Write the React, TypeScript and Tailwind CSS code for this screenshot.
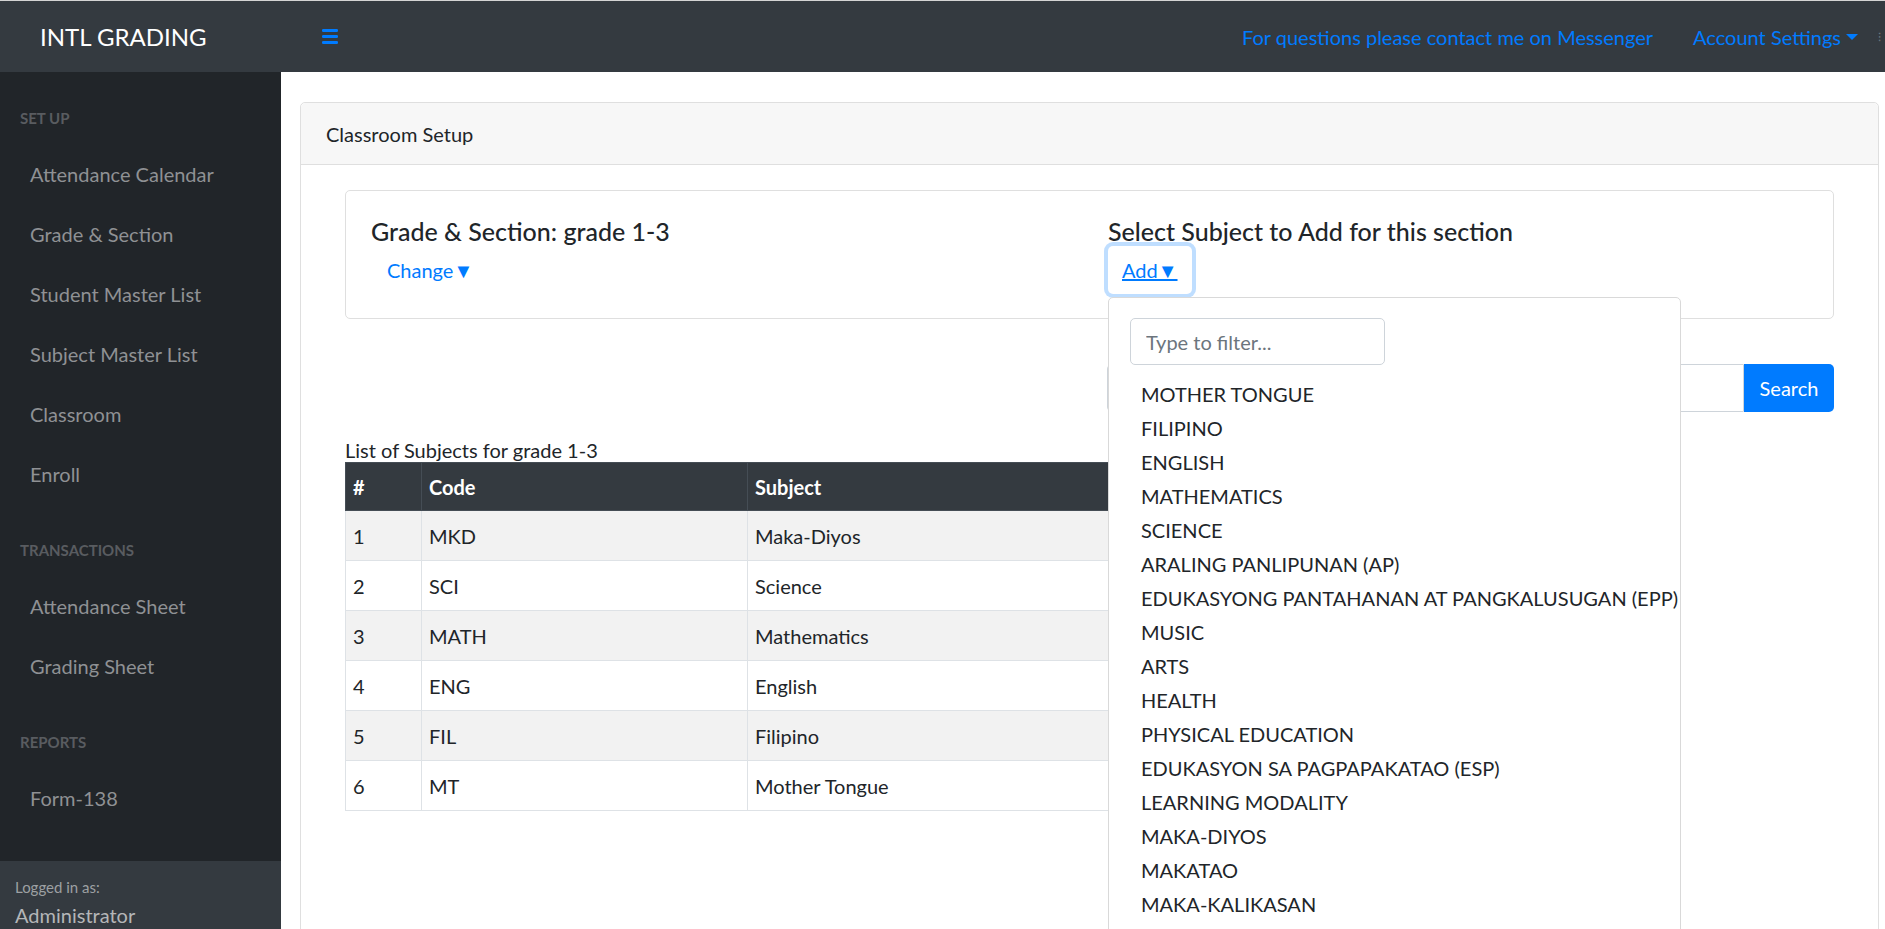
const menu = [
  {
    title: 'SET UP',
    items: ['Attendance Calendar', 'Grade & Section', 'Student Master List', 'Subject Master List', 'Classroom', 'Enroll'],
  },
  { title: 'TRANSACTIONS', items: ['Attendance Sheet', 'Grading Sheet'] },
  { title: 'REPORTS', items: ['Form-138'] },
];

const subjects = [
  { no: 1, code: 'MKD', name: 'Maka-Diyos' },
  { no: 2, code: 'SCI', name: 'Science' },
  { no: 3, code: 'MATH', name: 'Mathematics' },
  { no: 4, code: 'ENG', name: 'English' },
  { no: 5, code: 'FIL', name: 'Filipino' },
  { no: 6, code: 'MT', name: 'Mother Tongue' },
];

const options = [
  'MOTHER TONGUE',
  'FILIPINO',
  'ENGLISH',
  'MATHEMATICS',
  'SCIENCE',
  'ARALING PANLIPUNAN (AP)',
  'EDUKASYONG PANTAHANAN AT PANGKALUSUGAN (EPP)',
  'MUSIC',
  'ARTS',
  'HEALTH',
  'PHYSICAL EDUCATION',
  'EDUKASYON SA PAGPAPAKATAO (ESP)',
  'LEARNING MODALITY',
  'MAKA-DIYOS',
  'MAKATAO',
  'MAKA-KALIKASAN',
];

function Navbar() {
  return (
    <nav className="h-[72px] shrink-0 bg-[#343a40] border-t border-[#d4d4d4] flex items-center">
      <div className="w-[281px] pl-[40px] text-[24px] text-white leading-none">INTL GRADING</div>
      <button className="ml-[41px] text-[#007bff]">
        <svg width="16" height="15" viewBox="0 0 16 15" fill="currentColor">
          <rect x="0" y="0" width="16" height="3" rx="1.2" />
          <rect x="0" y="6" width="16" height="3" rx="1.2" />
          <rect x="0" y="12" width="16" height="3" rx="1.2" />
        </svg>
      </button>
      <div className="ml-auto flex items-center text-[20px] text-[#007bff]">
        <a className="mr-[40px]">For questions please contact me on Messenger</a>
        <a className="flex items-center">
          Account Settings
          <span className="ml-[5px] inline-block w-0 h-0 border-x-[6px] border-x-transparent border-t-[6px] border-t-[#007bff]" />
        </a>
        <span className="ml-[20px] mr-[4px] text-[12px] text-[#6c757d]">⁝</span>
      </div>
    </nav>
  );
}

function Sidebar() {
  return (
    <aside className="w-[281px] shrink-0 bg-[#212529] flex flex-col justify-between">
      <div>
        {menu.map((section) => (
          <div key={section.title}>
            <div className="pt-[35px] pb-[15px] px-[20px] text-[15px] leading-[22px] font-bold text-[#595c60]">
              {section.title}
            </div>
            {section.items.map((item) => (
              <a key={item} className="block py-[15px] px-[30px] text-[20px] leading-[30px] text-[#8f9194]">
                {item}
              </a>
            ))}
          </div>
        ))}
      </div>
      <div className="bg-[#343a40] h-[68px] px-[15px] pt-[15px]">
        <div className="text-[15px] leading-[22px] text-[#9da0a3]">Logged in as:</div>
        <div className="pt-[2px] text-[20px] leading-[30px] text-[#b4b6b8]">Administrator</div>
      </div>
    </aside>
  );
}

export default function App() {
  return (
    <div className="h-[929px] overflow-hidden bg-white flex flex-col font-[Lato,'Open_Sans',sans-serif] text-[#212529]">
      <Navbar />
      <div className="flex flex-1 min-h-0">
        <Sidebar />
        <main className="flex-1 pl-[19px] pr-[6px] pt-[30px]">
          <div className="border border-[#dfdfdf] rounded-[5px] h-[900px]">
            <div className="h-[62px] bg-[#f7f7f7] border-b border-[#dfdfdf] rounded-t-[5px] px-[25px] flex items-center text-[20px]">
              Classroom Setup
            </div>
            <div className="p-[25px]">
              <div className="px-[19px]">
                <div className="border border-[#dfdfdf] rounded-[5px] px-[25px] pt-[26px] pb-[24px] grid grid-cols-[737px_1fr]">
                  <div>
                    <h5 className="text-[25px] leading-[29px] font-medium">Grade &amp; Section: grade 1-3</h5>
                    <button className="h-[48px] px-[16px] text-[20px] text-[#007bff]">Change▼</button>
                  </div>
                  <div>
                    <h5 className="text-[25px] leading-[29px] font-medium">Select Subject to Add for this section</h5>
                    <div className="relative">
                      <button className="h-[48px] px-[14px] text-[20px] text-[#007bff] underline rounded-[5px] shadow-[0_0_0_4px_rgba(0,123,255,0.25)]">
                        Add▼
                      </button>
                      <div className="absolute left-0 top-[51px] z-10 w-[573px] bg-white border border-[#d9d9d9] rounded-[5px] pt-[10px] pb-[60px]">
                        <input
                          placeholder="Type to filter..."
                          className="mx-[21px] mt-[10px] mb-[12px] w-[255px] h-[47px] border border-[#ced4da] rounded-[5px] px-[15px] text-[20px] placeholder:text-[#6c757d] outline-none"
                        />
                        {options.map((opt) => (
                          <div key={opt} className="px-[32px] h-[34px] flex items-center text-[20px] whitespace-nowrap">
                            {opt}
                          </div>
                        ))}
                      </div>
                    </div>
                  </div>
                </div>

                <div className="mt-[45px] flex justify-end">
                  <div className="w-[727px] flex h-[48px]">
                    <input className="flex-1 border border-[#ced4da] rounded-l-[5px] px-[15px] outline-none" />
                    <button className="w-[90px] bg-[#007bff] text-white text-[20px] rounded-r-[5px]">Search</button>
                  </div>
                </div>

                <div className="mt-[26px] text-[20px] leading-[24px]">List of Subjects for grade 1-3</div>
                <table className="w-[763px] table-fixed border-collapse text-[20px] text-left">
                  <colgroup>
                    <col className="w-[76px]" />
                    <col className="w-[326px]" />
                    <col className="w-[361px]" />
                  </colgroup>
                  <thead>
                    <tr className="h-[48px] bg-[#343a40] text-white">
                      <th className="px-[7px] border border-[#454d55] font-bold">#</th>
                      <th className="px-[7px] border border-[#454d55] font-bold">Code</th>
                      <th className="px-[7px] border border-[#454d55] font-bold">Subject</th>
                    </tr>
                  </thead>
                  <tbody>
                    {subjects.map((s) => (
                      <tr key={s.no} className={`h-[50px] ${s.no % 2 === 1 ? 'bg-[#f2f2f2]' : 'bg-white'}`}>
                        <td className="px-[7px] border border-[#dee2e6]">{s.no}</td>
                        <td className="px-[7px] border border-[#dee2e6]">{s.code}</td>
                        <td className="px-[7px] border border-[#dee2e6]">{s.name}</td>
                      </tr>
                    ))}
                  </tbody>
                </table>
              </div>
            </div>
          </div>
        </main>
      </div>
    </div>
  );
}
